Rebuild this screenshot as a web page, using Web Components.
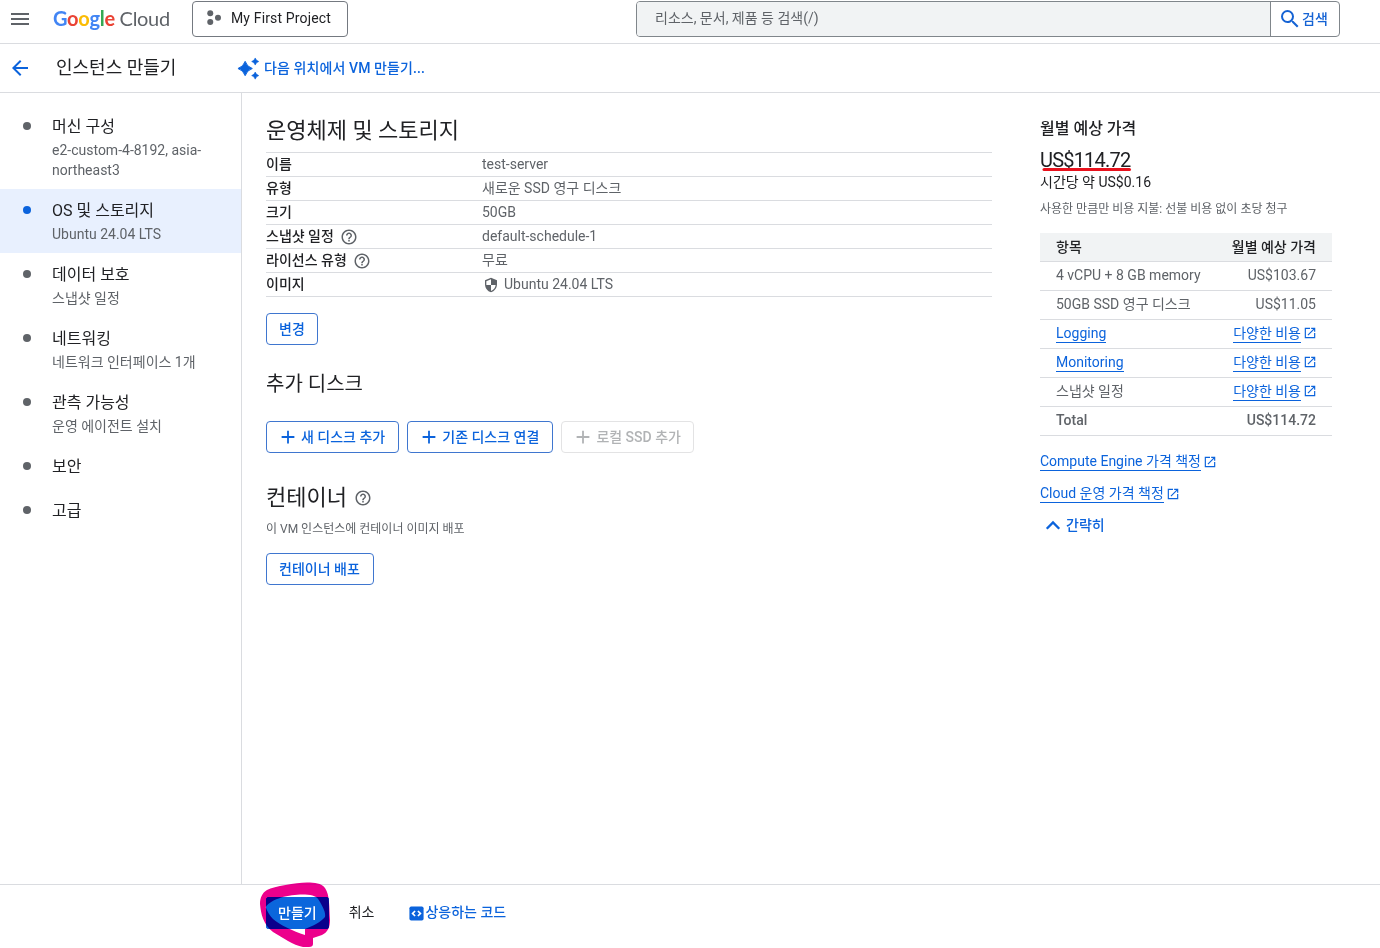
<!DOCTYPE html>
<html lang="ko">
<head>
<meta charset="utf-8">
<title>인스턴스 만들기</title>
<style>
  html, body { margin: 0; height: 100%; }
  body {
    overflow: hidden;
    background: #fff;
    color: #202124;
    font-family: Roboto, "Noto Sans CJK KR", sans-serif;
    font-size: 14px;
    line-height: 20px;
    --blue: #1563d4;
    --link: #0b63dc;
    --grey: #5f6368;
    --line: #dadce0;
  }
</style>
</head>
<body>
<vm-create-page></vm-create-page>

<script>
const ICONS = {
  menu: '<path d="M3 18h18v-2H3v2zm0-5h18v-2H3v2zm0-7v2h18V6H3z"/>',
  back: '<path d="M20 11H7.83l5.59-5.59L12 4l-8 8 8 8 1.41-1.41L7.83 13H20v-2z"/>',
  project: '<circle cx="7" cy="5.700" r="4"/><circle cx="7" cy="17.300" r="4"/><circle cx="17.300" cy="11.500" r="4"/>',
  spark: '<path d="M8.500 4.500Q10.300 10.200 16 12Q10.300 13.800 8.500 19.500Q6.700 13.800 1 12Q6.700 10.200 8.500 4.500z" stroke="currentColor" stroke-width="1"/><path d="M19 1q.9 2.900 3.700 3.700q-2.800.8-3.700 3.700q-.9-2.900-3.700-3.700Q18.100 3.900 19 1zM19 15.700q.9 2.900 3.700 3.700q-2.800.8-3.700 3.700q-.9-2.900-3.700-3.700q2.800-.8 3.700-3.700z" stroke="currentColor" stroke-width=".6"/>',
  search: '<path d="M15.500 14h-.79l-.28-.27A6.471 6.471 0 0 0 16 9.500 6.500 6.500 0 1 0 9.500 16c1.610 0 3.090-.59 4.230-1.570l.27.28v.79l5 4.990L20.490 19l-4.990-5zm-6 0C7.010 14 5 11.990 5 9.500S7.010 5 9.500 5 14 7.010 14 9.500 11.990 14 9.500 14z"/>',
  help: '<path d="M11 18h2v-2h-2v2zm1-16C6.480 2 2 6.480 2 12s4.480 10 10 10 10-4.480 10-10S17.520 2 12 2zm0 18c-4.410 0-8-3.590-8-8s3.590-8 8-8 8 3.590 8 8-3.590 8-8 8zm0-14c-2.210 0-4 1.790-4 4h2c0-1.100.9-2 2-2s2 .9 2 2c0 2-3 1.750-3 5h2c0-2.250 3-2.500 3-5 0-2.210-1.790-4-4-4z"/>',
  shield: '<path d="M12 1L3 5v6c0 5.550 3.840 10.740 9 12 5.160-1.260 9-6.450 9-12V5l-9-4zm0 10.990h7c-.53 4.120-3.280 7.790-7 8.940V12H5V6.300l7-3.110v8.800z"/>',
  plus: '<path d="M20.500 13.200h-7.300v7.300h-2.400v-7.300H3.500v-2.400h7.300V3.500h2.400v7.300h7.300v2.400z"/>',
  open: '<path d="M19 19H5V5h7V3H3v18h18v-9h-2v7zM14 3v2h3.590l-9.830 9.830 1.410 1.410L19 6.410V10h2V3h-7z"/>',
  up: '<path d="M4.500 16.500L12 9l7.500 7.500" fill="none" stroke="currentColor" stroke-width="2.800"/>',
  code: '<rect x="2" y="2" width="20" height="20" rx="2.500"/><path d="M10 8.500L6.500 12l3.500 3.500M14 8.500L17.500 12 14 15.500" fill="none" stroke="#fff" stroke-width="2.400"/>'
};

class GcIcon extends HTMLElement {
  constructor() {
    super();
    this.attachShadow({ mode: 'open' });
  }

  connectedCallback() {
    const size = this.getAttribute('size') || 18;
    this.shadowRoot.innerHTML = `
      <style>
        :host { display: inline-flex; flex: none; width: ${size}px; height: ${size}px; }
        svg { display: block; width: 100%; height: 100%; fill: currentColor; }
      </style>
      <svg viewBox="0 0 24 24">${ICONS[this.getAttribute('name')]}</svg>
    `;
  }
}

class GcLogo extends HTMLElement {
  constructor() {
    super();
    this.attachShadow({ mode: 'open' });
    this.shadowRoot.innerHTML = `
      <style>
        :host {
          display: block;
          width: 118px;
          font: 400 20px/24px Lato, sans-serif;
          letter-spacing: -0.3px;
          white-space: nowrap;
          color: var(--grey);
        }
        .b { color: #4285f4; } .r { color: #ea4335; }
        .y { color: #fbbc04; } .g { color: #34a853; }
        .google { font-weight: 700; }
      </style>
      <span class="google"><span class="b">G</span><span class="r">o</span><span class="y">o</span><span class="b">g</span><span class="g">l</span><span class="r">e</span></span><span> Cloud</span>
    `;
  }
}

class GcHeader extends HTMLElement {
  constructor() {
    super();
    this.attachShadow({ mode: 'open' });
    this.shadowRoot.innerHTML = `
      <style>
        :host {
          display: flex;
          align-items: flex-start;
          box-sizing: border-box;
          height: 44px;
          padding: 1px 40px 0 8px;
          border-bottom: 1px solid var(--line);
        }
        .menu { margin-top: 6px; color: var(--grey); }
        gc-logo { margin: 5px 0 0 21px; }
        .project {
          display: flex;
          align-items: center;
          box-sizing: border-box;
          width: 156px;
          height: 36px;
          margin-left: 21px;
          padding: 0 0 2px 12px;
          gap: 8px;
          border: 1px solid #747980;
          border-radius: 4px;
          letter-spacing: .15px;
        }
        .project gc-icon { color: var(--grey); }
        .search {
          display: flex;
          box-sizing: border-box;
          width: 704px;
          height: 36px;
          margin-left: auto;
          border: 1px solid #80868b;
          border-radius: 4px;
          overflow: hidden;
        }
        .field {
          flex: 1;
          padding: 6px 18px;
          background: #f1f3f4;
          color: var(--grey);
        }
        .go {
          display: flex;
          align-items: center;
          box-sizing: border-box;
          width: 69px;
          padding: 0 0 1px 7px;
          border-left: 1px solid #80868b;
          color: var(--blue);
          font-weight: 500;
        }
        .go gc-icon { margin-top: 1px; }
      </style>
      <gc-icon class="menu" name="menu" size="24"></gc-icon>
      <gc-logo></gc-logo>
      <div class="project"><gc-icon name="project" size="18"></gc-icon><span>My First Project</span></div>
      <div class="search">
        <div class="field">리소스, 문서, 제품 등 검색(/)</div>
        <div class="go"><gc-icon name="search" size="24"></gc-icon>검색</div>
      </div>
    `;
  }
}

class GcTitlebar extends HTMLElement {
  constructor() {
    super();
    this.attachShadow({ mode: 'open' });
    this.shadowRoot.innerHTML = `
      <style>
        :host {
          display: flex;
          align-items: center;
          box-sizing: border-box;
          height: 49px;
          padding-left: 8px;
          border-bottom: 1px solid var(--line);
        }
        .back, .from { color: var(--link); }
        h1 {
          width: 181px;
          margin: 0 0 1px 24px;
          font-size: 18px;
          line-height: 24px;
          font-weight: 400;
        }
        .from { display: flex; align-items: center; gap: 4px; font-weight: 500; letter-spacing: .1px; }
      </style>
      <gc-icon class="back" name="back" size="24"></gc-icon>
      <h1>인스턴스 만들기</h1>
      <div class="from"><gc-icon name="spark" size="23"></gc-icon><span>다음 위치에서 VM 만들기...</span></div>
    `;
  }
}

class NavStep extends HTMLElement {
  constructor() {
    super();
    this.attachShadow({ mode: 'open' });
    this.shadowRoot.innerHTML = `
      <style>
        :host {
          display: grid;
          grid-template-columns: 8px 1fr;
          column-gap: 21px;
          padding: 10px 24px 9px 23px;
          color: var(--grey);
        }
        :host([active]) { background: #e8f0fe; }
        .dot {
          width: 8px;
          height: 8px;
          margin-top: 7px;
          border-radius: 50%;
          background: var(--grey);
        }
        :host([active]) .dot { background: var(--link); }
        .title { color: #202124; font-size: 16px; line-height: 24px; padding-bottom: 1px; }
      </style>
      <span class="dot"></span>
      <div>
        <div class="title"><slot name="title"></slot></div>
        <slot></slot>
      </div>
    `;
  }
}

class GcButton extends HTMLElement {
  constructor() {
    super();
    this.attachShadow({ mode: 'open' });
  }

  connectedCallback() {
    const icon = this.getAttribute('icon');
    this.shadowRoot.innerHTML = `
      <style>
        :host {
          display: inline-flex;
          align-items: center;
          box-sizing: border-box;
          height: 32px;
          padding: 0 12px 1px;
          border: 1px solid #3f76cf;
          border-radius: 4px;
          color: var(--link);
          font-weight: 500;
          line-height: 20px;
          white-space: nowrap;
        }
        :host([icon]) { padding-right: 13px; }
        :host([disabled]) { padding-right: 12px; border-color: #e3e3e4; color: #b1b3b5; }
        :host([primary]) { background: #0b66dc; border-color: #0b66dc; color: #fff; padding: 0 11px 1px; border-radius: 2px; }
        gc-icon { margin: 1px 4px 0 0; }
      </style>
      ${icon ? `<gc-icon name="${icon}" size="18"></gc-icon>` : ''}<slot></slot>
    `;
  }
}

class DetailRow extends HTMLElement {
  constructor() {
    super();
    this.attachShadow({ mode: 'open' });
  }

  connectedCallback() {
    this.shadowRoot.innerHTML = `
      <style>
        :host {
          display: grid;
          grid-template-columns: 216px 1fr;
          box-sizing: border-box;
          height: 24px;
          border-bottom: 1px solid var(--line);
          line-height: 23px;
        }
        .label { display: flex; align-items: center; gap: 6px; font-weight: 500; }
        .label gc-icon { color: var(--grey); margin-top: 1px; }
        .value { display: flex; align-items: center; color: var(--grey); }
      </style>
      <div class="label">${this.getAttribute('label')}${this.hasAttribute('help') ? '<gc-icon name="help" size="18"></gc-icon>' : ''}</div>
      <div class="value"><slot></slot></div>
    `;
  }
}

class GcLink extends HTMLElement {
  constructor() {
    super();
    this.attachShadow({ mode: 'open' });
    this.shadowRoot.innerHTML = `
      <style>
        :host { display: inline-flex; align-items: center; gap: 2px; color: var(--link); line-height: 18px; }
        span { border-bottom: 1px solid; }
        gc-icon { display: none; margin-right: -1px; }
        :host([external]) gc-icon { display: inline-flex; }
      </style>
      <span><slot></slot></span><gc-icon name="open" size="14"></gc-icon>
    `;
  }
}

class CostRow extends HTMLElement {
  constructor() {
    super();
    this.attachShadow({ mode: 'open' });
    this.shadowRoot.innerHTML = `
      <style>
        :host {
          display: flex;
          justify-content: space-between;
          align-items: center;
          box-sizing: border-box;
          height: 29px;
          padding: 0 16px 2px;
          border-bottom: 1px solid var(--line);
          color: var(--grey);
        }
        :host([head]) { padding-bottom: 1px; background: #f1f3f4; color: #202124; font-weight: 500; }
        :host([total]) { font-weight: 500; }
      </style>
      <slot name="item"></slot>
      <slot></slot>
    `;
  }
}

class OsStorage extends HTMLElement {
  constructor() {
    super();
    this.attachShadow({ mode: 'open' });
    this.shadowRoot.innerHTML = `
      <style>
        :host { display: block; width: 726px; padding: 24px 0 0 24px; }
        h2, h3 { margin: 0; font-weight: 400; }
        h2 { font-size: 22px; line-height: 28px; }
        h3 { font-size: 20px; line-height: 28px; }
        .rows { margin: 7px 0 16px; border-top: 1px solid var(--line); }
        .rows gc-icon { margin: 0 5px 0 1px; }
        .disks { margin-top: 25px; }
        .buttons { display: flex; gap: 8px; margin-top: 23px; }
        .container { display: flex; align-items: center; gap: 7px; margin-top: 31px; color: var(--grey); }
        .container h2 { color: #202124; }
        .note { margin: 7px 0 14px; font-size: 12px; line-height: 20px; color: var(--grey); }
        .deploy { width: 108px; }
      </style>
      <h2>운영체제 및 스토리지</h2>
      <div class="rows">
        <detail-row label="이름">test-server</detail-row>
        <detail-row label="유형">새로운 SSD 영구 디스크</detail-row>
        <detail-row label="크기">50GB</detail-row>
        <detail-row label="스냅샷 일정" help>default-schedule-1</detail-row>
        <detail-row label="라이선스 유형" help>무료</detail-row>
        <detail-row label="이미지"><gc-icon name="shield" size="16"></gc-icon>Ubuntu 24.04 LTS</detail-row>
      </div>
      <gc-button>변경</gc-button>
      <h3 class="disks">추가 디스크</h3>
      <div class="buttons">
        <gc-button icon="plus">새 디스크 추가</gc-button>
        <gc-button icon="plus">기존 디스크 연결</gc-button>
        <gc-button icon="plus" disabled>로컬 SSD 추가</gc-button>
      </div>
      <div class="container"><h2>컨테이너</h2><gc-icon name="help" size="18"></gc-icon></div>
      <div class="note">이 VM 인스턴스에 컨테이너 이미지 배포</div>
      <gc-button class="deploy">컨테이너 배포</gc-button>
    `;
  }
}

class PriceEstimate extends HTMLElement {
  constructor() {
    super();
    this.attachShadow({ mode: 'open' });
    this.shadowRoot.innerHTML = `
      <style>
        :host { display: block; width: 292px; padding: 24px 0 0 48px; }
        .title { font-size: 16px; line-height: 24px; font-weight: 500; }
        .price { position: relative; width: max-content; margin-top: 7px; font-size: 20px; line-height: 24px; letter-spacing: -.8px; }
        .price svg { position: absolute; left: 1px; top: 19px; width: 92px; height: 6px; overflow: visible; }
        .note { margin: 7px 0 14px; font-size: 12px; line-height: 20px; color: var(--grey); }
        .links { display: flex; flex-direction: column; align-items: flex-start; gap: 13px; margin-top: 16px; }
        .less { display: flex; align-items: center; gap: 3px; margin: 12px 0 0 3px; color: var(--link); font-weight: 500; }
      </style>
      <div class="title">월별 예상 가격</div>
      <div class="price">US$114.72<svg viewBox="0 0 92 6"><path d="M3 2.500H88.500" stroke="#e8121d" stroke-width="3" stroke-linecap="round"/></svg></div>
      <div>시간당 약 US$0.16</div>
      <div class="note">사용한 만큼만 비용 지불: 선불 비용 없이 초당 청구</div>
      <cost-row head><span slot="item">항목</span>월별 예상 가격</cost-row>
      <cost-row><span slot="item">4 vCPU + 8 GB memory</span>US$103.67</cost-row>
      <cost-row><span slot="item">50GB SSD 영구 디스크</span>US$11.05</cost-row>
      <cost-row><gc-link slot="item">Logging</gc-link><gc-link external>다양한 비용</gc-link></cost-row>
      <cost-row><gc-link slot="item">Monitoring</gc-link><gc-link external>다양한 비용</gc-link></cost-row>
      <cost-row><span slot="item">스냅샷 일정</span><gc-link external>다양한 비용</gc-link></cost-row>
      <cost-row total><span slot="item">Total</span>US$114.72</cost-row>
      <div class="links">
        <gc-link external>Compute Engine 가격 책정</gc-link>
        <gc-link external>Cloud 운영 가격 책정</gc-link>
      </div>
      <div class="less"><gc-icon name="up" size="20"></gc-icon>간략히</div>
    `;
  }
}

class ActionBar extends HTMLElement {
  constructor() {
    super();
    this.attachShadow({ mode: 'open' });
    this.shadowRoot.innerHTML = `
      <style>
        :host {
          display: flex;
          align-items: flex-start;
          box-sizing: border-box;
          height: 64px;
          padding: 12px 0 0 266px;
          border-top: 1px solid var(--line);
          line-height: 31px;
          font-weight: 500;
        }
        .create { position: relative; display: flex; }
        .create svg {
          position: absolute;
          left: -11px;
          top: -19px;
          width: 80px;
          height: 70px;
          mix-blend-mode: darken;
        }
        .cancel { margin-left: 20px; font-weight: 400; }
        .code { display: flex; align-items: center; margin-left: 34px; color: var(--link); }
        .code gc-icon { margin-top: 1px; }
      </style>
      <div class="create">
        <gc-button primary>만들기</gc-button>
        <svg viewBox="0 0 80 70"><path fill="#ec008c" fill-rule="evenodd" d="M5 26C5 20 7 15 12 12C20 8 40 5 52 4.500C60 4.500 66 5 70 10C75 17 74 30 75 42C75 49 73 54 67 57L58 60V66Q58 69 54 69H48C38 67 28 60 18 54C8 46 6 36 5 26zM10.700 29C12 33 15 38 18 41C25 47 38 53 50 57V51C58 48 66 44 70 39C71 35 68 29 65 24C62 18 58 17 50 16.500C36 16 17 20 10.700 29z"/></svg>
      </div>
      <div class="cancel">취소</div>
      <div class="code"><gc-icon name="code" size="17"></gc-icon>상응하는 코드</div>
    `;
  }
}

class VmCreatePage extends HTMLElement {
  constructor() {
    super();
    this.attachShadow({ mode: 'open' });
    this.shadowRoot.innerHTML = `
      <style>
        :host { display: flex; flex-direction: column; height: 100vh; }
        .body { display: flex; flex: 1; min-height: 0; }
        nav {
          box-sizing: border-box;
          width: 242px;
          padding-top: 12px;
          border-right: 1px solid var(--line);
        }
      </style>
      <gc-header></gc-header>
      <gc-titlebar></gc-titlebar>
      <div class="body">
        <nav>
          <nav-step><span slot="title">머신 구성</span>e2-custom-4-8192, asia-northeast3</nav-step>
          <nav-step active><span slot="title">OS 및 스토리지</span>Ubuntu 24.04 LTS</nav-step>
          <nav-step><span slot="title">데이터 보호</span>스냅샷 일정</nav-step>
          <nav-step><span slot="title">네트워킹</span>네트워크 인터페이스 1개</nav-step>
          <nav-step><span slot="title">관측 가능성</span>운영 에이전트 설치</nav-step>
          <nav-step><span slot="title">보안</span></nav-step>
          <nav-step><span slot="title">고급</span></nav-step>
        </nav>
        <os-storage></os-storage>
        <price-estimate></price-estimate>
      </div>
      <action-bar></action-bar>
    `;
  }
}

customElements.define('gc-icon', GcIcon);
customElements.define('gc-logo', GcLogo);
customElements.define('gc-link', GcLink);
customElements.define('gc-button', GcButton);
customElements.define('gc-header', GcHeader);
customElements.define('gc-titlebar', GcTitlebar);
customElements.define('nav-step', NavStep);
customElements.define('detail-row', DetailRow);
customElements.define('cost-row', CostRow);
customElements.define('os-storage', OsStorage);
customElements.define('price-estimate', PriceEstimate);
customElements.define('action-bar', ActionBar);
customElements.define('vm-create-page', VmCreatePage);
</script>
</body>
</html>
